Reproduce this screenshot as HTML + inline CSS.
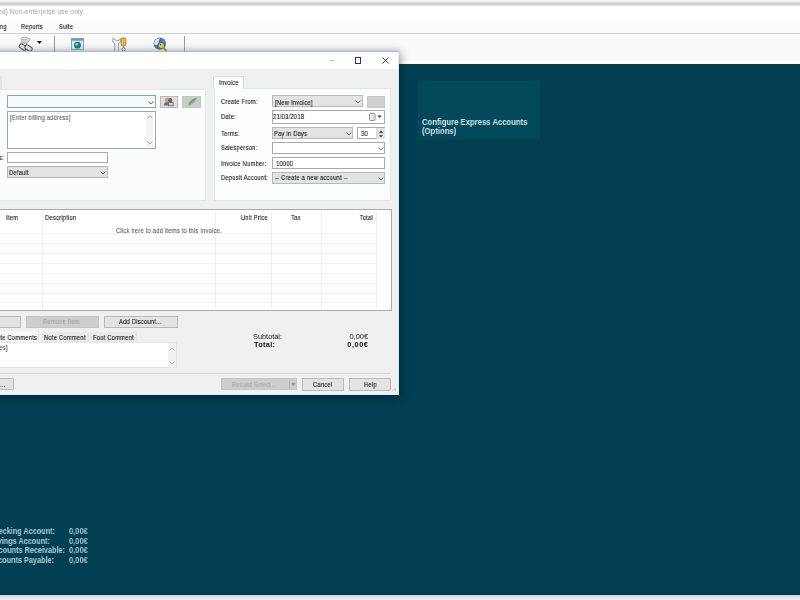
<!DOCTYPE html>
<html><head><meta charset="utf-8">
<style>
html,body{margin:0;padding:0;}
body{width:800px;height:600px;overflow:hidden;position:relative;background:#013f52;font-family:"Liberation Sans",sans-serif;}
.a{position:absolute;box-sizing:border-box;}
.t{position:absolute;white-space:nowrap;line-height:10px;height:10px;font-family:"Liberation Sans",sans-serif;font-size:7px;color:#111;letter-spacing:0.25px;will-change:transform;transform:scaleX(0.83);-webkit-text-stroke:0.1px currentColor;transform-origin:0 0;}
.r{transform-origin:100% 0;text-align:right;}
.cmb{position:absolute;box-sizing:border-box;background:#e3e3e3;border:1px solid #b8b8b8;}
.box{position:absolute;box-sizing:border-box;background:#fff;border:1px solid #a9a9a9;}
.btn{position:absolute;box-sizing:border-box;background:#e3e3e3;border:1px solid #bababa;}
.dis{position:absolute;box-sizing:border-box;background:#cdcdcd;border:1px solid #c6c6c6;}
.chev{position:absolute;width:6px;height:4px;}
.hl{position:absolute;height:1px;background:#f2f2f2;}
.vl{position:absolute;width:1px;background:#efefef;}
#root{position:absolute;left:0;top:0;width:800px;height:600px;overflow:hidden;background:#013f52;filter:blur(0.4px);}
</style></head><body><div id="root">

<!-- top chrome -->
<div class="a" style="left:0;top:0;width:800px;height:6.5px;background:linear-gradient(#fdfdfd 0px,#ebebeb 1.6px,#d6d6d6 3px,#cbcbcb 4.3px,#e2e2e2 5.3px,#fcfcfc 6.5px)"></div>
<div class="a" style="left:0;top:6.5px;width:800px;height:12.5px;background:#fff"></div>
<div class="t" style="transform:none;letter-spacing:0;-webkit-text-stroke:0;left:-21.9px;top:7.4px;font-size:6.9px;color:#a5a5a5">Licensed) Non-enterprise use only</div>
<div class="a" style="left:0;top:19px;width:800px;height:14px;background:#fbfbfb"></div>
<div class="t" style="left:-17.6px;top:22.2px;">Invoicing</div>
<div class="t" style="left:21px;top:22.2px;">Reports</div>
<div class="t" style="left:59.4px;top:22.2px;">Suite</div>
<div class="a" style="left:0;top:33px;width:800px;height:1px;background:#cfcfcf"></div>
<div class="a" style="left:0;top:34px;width:800px;height:30px;background:linear-gradient(#f9f9f9,#f9f9f9 88%,#fefefe 90%,#fdfdfd)"></div>
<div class="a" style="left:0;top:64px;width:800px;height:1px;background:#1a3844"></div>
<div class="a" style="left:0;top:34px;width:400px;height:18px;background:linear-gradient(#fafafa,#f9f9f9 60%,#f2f4f6 82%,#e3eaf0)"></div>

<!-- toolbar icons -->
<svg class="a" style="left:18px;top:36px" width="16" height="16" viewBox="0 0 16 16">
  <path d="M3 2.5C4 1 7 0.8 9 1.5l2.5 1.5-0.5 2.5-2 0.5L9 7.5 4 8z" fill="#e6e6e6" stroke="#8a8a8a" stroke-width="0.7"/>
  <path d="M4 3.5h5M4.5 5h4M4 6.5h4" stroke="#a0a0a0" stroke-width="0.6"/>
  <rect x="1.2" y="9" width="7.5" height="4.2" rx="1.6" transform="rotate(32 5 11)" fill="#e4e8ea" stroke="#484848" stroke-width="0.95"/>
  <rect x="6.8" y="10" width="7.5" height="4.2" rx="1.6" transform="rotate(32 10.5 12)" fill="#e4e8ea" stroke="#484848" stroke-width="0.95"/>
</svg>
<svg class="a" style="left:37px;top:41px" width="5" height="3" viewBox="0 0 5 3"><path d="M0 0h5L2.5 3z" fill="#111"/></svg>
<svg class="a" style="left:71px;top:38px" width="13" height="12" viewBox="0 0 13 12">
  <rect x="0.5" y="0.5" width="12" height="11" fill="#d6f0f0" stroke="#8fa4ac"/>
  <rect x="0.5" y="0.5" width="12" height="2.2" fill="#6f9cb2"/>
  <circle cx="6.5" cy="7.2" r="3.4" fill="#1f7f78"/>
  <circle cx="5.8" cy="6.4" r="1.3" fill="#86d4cc"/>
</svg>
<svg class="a" style="left:112px;top:36.5px" width="15" height="15" viewBox="0 0 15 15">
  <path d="M0.8 1.5v3.5l2 2v6.5l1.2 1h1.2l1.2-1V7l2-2V1.5L6.8 3.5h-2.4z" fill="#f4f4f4" stroke="#8a8a8a" stroke-width="0.8"/>
  <rect x="9" y="0.8" width="5" height="8" rx="1.6" fill="#d8aa30" stroke="#a88428" stroke-width="0.6"/>
  <path d="M10.5 2.5v5M12.5 2.5v5" stroke="#f0d070" stroke-width="0.6"/>
  <path d="M11.5 9v1.5" stroke="#777" stroke-width="0.9"/>
  <circle cx="11.5" cy="12.3" r="1.7" fill="#f2f2f2" stroke="#6a6a6a" stroke-width="0.8"/>
</svg>
<svg class="a" style="left:153px;top:36.5px" width="15" height="15" viewBox="0 0 15 15">
  <circle cx="6.8" cy="6.6" r="6.2" fill="#4a6cb0"/>
  <path d="M1.5 4.5C2.5 2 5 1 7 1.2 5.5 3 6 5 4.5 7.5 3 9 1.5 8 1.2 6.5z" fill="#dce8f4"/>
  <path d="M8 1.5c2 0.5 3.5 2 4 3.5-1 0.5-2.5 0-3-1z" fill="#6a8cc8"/>
  <path d="M9 9.5l4.5 4.3" stroke="#8a9a20" stroke-width="1.8"/>
  <circle cx="8.3" cy="8.6" r="2.5" fill="#e6e030"/>
  <circle cx="7.5" cy="7.8" r="0.7" fill="#404010"/>
</svg>
<div class="a" style="left:54px;top:36px;width:1px;height:16px;background:#9a9a9a"></div>
<div class="a" style="left:184px;top:36px;width:1px;height:16px;background:#9a9a9a"></div>

<!-- dialog -->
<div class="a" style="left:-10px;top:51px;width:409px;height:344px;background:#f0f0f0;border:1px solid #a9bccb;border-left:none;border-bottom-color:#dbecf4;border-right-color:#d8eaf4;box-shadow:1px 2px 9px rgba(0,15,25,0.45)"></div>
<div class="a" style="left:0;top:52px;width:398px;height:17px;background:#fff"></div>
<!-- caption buttons -->
<div class="a" style="left:329px;top:60px;width:6px;height:1px;background:#c8c8c8"></div>
<div class="a" style="left:355px;top:57px;width:6px;height:6.5px;border:1px solid #333"></div>
<svg class="a" style="left:382px;top:57px" width="7" height="7" viewBox="0 0 7 7"><path d="M0.5 0.5l6 6M6.5 0.5l-6 6" stroke="#333" stroke-width="0.9"/></svg>

<!-- left panel (customer) -->
<div class="a" style="left:0;top:76px;width:2px;height:13px;background:#e4e4e4"></div>
<div class="a" style="left:-5px;top:88.5px;width:211px;height:112px;background:#fbfdfd;border:1px solid #e6e6e6"></div>
<div class="a" style="left:7px;top:95px;width:148.5px;height:12.5px;background:#f6fbfb;border:1px solid #86a9ab"></div>
<svg class="chev" style="left:148px;top:100.5px" viewBox="0 0 6 4"><path d="M0.5 0.5L3 3l2.5-2.5" fill="none" stroke="#555" stroke-width="0.8"/></svg>
<div class="btn" style="left:159.5px;top:96px;width:18.5px;height:11.5px;background:#dedede"></div>
<svg class="a" style="left:163px;top:97px" width="11" height="10" viewBox="0 0 11 10">
  <ellipse cx="4" cy="3" rx="2.4" ry="2.4" fill="#c4a888"/>
  <ellipse cx="7.2" cy="3.2" rx="2" ry="2.2" fill="#7a5a40"/>
  <path d="M0.8 8.5c0-2.5 1.5-3.5 3.2-3.5s3.2 1 3.2 3.5z" fill="#6a7858"/>
  <rect x="5.5" y="5.6" width="4.6" height="3.2" fill="#c8d0dc" stroke="#4a5a78" stroke-width="0.7"/>
</svg>
<div class="dis" style="left:182px;top:96px;width:18.5px;height:11.5px;background:#cbcbcb"></div>
<svg class="a" style="left:186px;top:96.5px" width="12" height="10" viewBox="0 0 12 10">
  <path d="M2 7.5C3 5 6 2 9 1l1.2 1.3C9 5 6 7.5 3.2 8.6z" fill="#72b868" opacity="0.9"/>
  <path d="M3.5 6.5C5 4.5 7 3 9 2" stroke="#4a9a48" stroke-width="0.9" fill="none"/>
  <path d="M9 1l1.5-0.5 0.5 1.5-0.8 0.3z" fill="#909890"/>
</svg>
<div class="box" style="left:7px;top:111px;width:148.5px;height:37.5px;border-color:#a4a4a4"></div>
<div class="a" style="left:145.5px;top:112px;width:7px;height:35px;background:#f4f4f4"></div>
<div class="t" style="left:10px;top:113.2px;color:#5a5a5a">[Enter billing address]</div>
<svg class="chev" style="left:147px;top:114.8px" viewBox="0 0 6 4"><path d="M0.5 3.5L3 1l2.5 2.5" fill="none" stroke="#999" stroke-width="0.8"/></svg>
<svg class="chev" style="left:147px;top:140.5px" viewBox="0 0 6 4"><path d="M0.5 0.5L3 3l2.5-2.5" fill="none" stroke="#999" stroke-width="0.8"/></svg>
<div class="t" style="left:-46px;top:153px;width:50px;text-align:right;transform-origin:100% 0">Address:</div>
<div class="box" style="left:7px;top:151.5px;width:100.5px;height:11px;"></div>
<div class="cmb" style="left:7px;top:166.2px;width:100.5px;height:11.8px;"></div>
<div class="t" style="left:9px;top:167.5px;">Default</div>
<svg class="chev" style="left:99.5px;top:170.5px" viewBox="0 0 6 4"><path d="M0.5 0.5L3 3l2.5-2.5" fill="none" stroke="#555" stroke-width="0.8"/></svg>

<!-- invoice tab + panel -->
<div class="a" style="left:214px;top:88px;width:176.5px;height:113.3px;background:#fdfefe;border:1px solid #e4e4e4"></div>
<div class="a" style="left:213px;top:76px;width:30.5px;height:13px;background:#fdfefe;border:1px solid #dedede;border-bottom:none"></div>
<div class="t" style="left:218.5px;top:77.8px;">Invoice</div>

<div class="t" style="left:220.8px;top:97.2px;">Create From:</div>
<div class="t" style="left:220.8px;top:111.7px;">Date:</div>
<div class="t" style="left:220.8px;top:128.8px;">Terms:</div>
<div class="t" style="left:220.8px;top:143.3px;">Salesperson:</div>
<div class="t" style="left:220.8px;top:158.8px;">Invoice Number:</div>
<div class="t" style="left:220.8px;top:173px;">Deposit Account:</div>

<div class="cmb" style="left:272.2px;top:95.3px;width:90.7px;height:12.2px;"></div>
<div class="t" style="left:274.7px;top:97.5px;">[New Invoice]</div>
<svg class="chev" style="left:355px;top:100px" viewBox="0 0 6 4"><path d="M0.5 0.5L3 3l2.5-2.5" fill="none" stroke="#555" stroke-width="0.8"/></svg>
<div class="dis" style="left:367px;top:96px;width:18px;height:11.5px;background:#cfcfcf"></div>

<div class="box" style="left:272.2px;top:110px;width:113.3px;height:13.5px;"></div>
<div class="t" style="left:273.4px;top:112.1px;">21/03/2018</div>
<svg class="a" style="left:369px;top:113px" width="13" height="8" viewBox="0 0 13 8">
  <rect x="0.5" y="0.5" width="5.5" height="7" rx="1" fill="#e8e8e8" stroke="#777" stroke-width="0.8"/>
  <path d="M8.5 2.5h4L10.5 5z" fill="#333"/>
</svg>

<div class="cmb" style="left:272.2px;top:127.2px;width:80.5px;height:12.3px;"></div>
<div class="t" style="left:274px;top:128.8px;">Pay in Days</div>
<svg class="chev" style="left:345.5px;top:132px" viewBox="0 0 6 4"><path d="M0.5 0.5L3 3l2.5-2.5" fill="none" stroke="#555" stroke-width="0.8"/></svg>
<div class="box" style="left:357px;top:127.2px;width:28px;height:12.3px;"></div>
<div class="t" style="left:360.8px;top:128.8px;">30</div>
<div class="a" style="left:375.5px;top:128px;width:9px;height:10.8px;background:#e4e4e4;border-left:1px solid #d4d4d4"></div>
<div class="a" style="left:376px;top:133px;width:8px;height:1px;background:#d0d0d0"></div>
<svg class="a" style="left:377.5px;top:129.5px" width="6" height="8" viewBox="0 0 6 8"><path d="M1 2.8h4L3 0.8z" fill="#222"/><path d="M1 5.2h4L3 7.2z" fill="#222"/></svg>

<div class="box" style="left:272.2px;top:142px;width:113.3px;height:12.4px;"></div>
<svg class="chev" style="left:378px;top:147px" viewBox="0 0 6 4"><path d="M0.5 0.5L3 3l2.5-2.5" fill="none" stroke="#555" stroke-width="0.8"/></svg>

<div class="box" style="left:272.2px;top:157.4px;width:113.3px;height:11.4px;"></div>
<div class="t" style="left:276px;top:158.8px;">10000</div>

<div class="cmb" style="left:272.2px;top:172.2px;width:113.3px;height:11.4px;"></div>
<div class="t" style="left:274.5px;top:173px;">-- Create a new account --</div>
<svg class="chev" style="left:378px;top:176.5px" viewBox="0 0 6 4"><path d="M0.5 0.5L3 3l2.5-2.5" fill="none" stroke="#555" stroke-width="0.8"/></svg>

<!-- grid -->
<div class="a" style="left:-5px;top:209px;width:397px;height:101.5px;background:#fff;border:1px solid #aaaaaa"></div>
<div class="hl" style="left:0;top:233px;width:376px"></div>
<div class="hl" style="left:0;top:243px;width:376px"></div>
<div class="hl" style="left:0;top:253px;width:376px"></div>
<div class="hl" style="left:0;top:263px;width:376px"></div>
<div class="hl" style="left:0;top:273px;width:376px"></div>
<div class="hl" style="left:0;top:283px;width:376px"></div>
<div class="hl" style="left:0;top:292.5px;width:376px"></div>
<div class="hl" style="left:0;top:302px;width:376px"></div>
<div class="vl" style="left:41.5px;top:210px;height:100px"></div>
<div class="vl" style="left:215px;top:210px;height:100px"></div>
<div class="vl" style="left:271px;top:210px;height:100px"></div>
<div class="vl" style="left:320.5px;top:210px;height:100px"></div>
<div class="vl" style="left:376px;top:210px;height:100px"></div>
<div class="t" style="left:5.6px;top:212.5px;">Item</div>
<div class="t" style="left:45px;top:212.5px;">Description</div>
<div class="t" style="left:207.7px;top:212.5px;width:60px;text-align:right;transform-origin:100% 0">Unit Price</div>
<div class="t" style="left:290.5px;top:212.5px;">Tax</div>
<div class="t" style="left:312.7px;top:212.5px;width:60px;text-align:right;transform-origin:100% 0">Total</div>
<div class="t" style="left:116.1px;top:226px;color:#575757">Click here to add items to this invoice.</div>

<!-- buttons row -->
<div class="btn" style="left:-10px;top:315.6px;width:30.6px;height:12px;"></div>
<div class="dis" style="left:25.6px;top:315.6px;width:73.2px;height:12px;"></div>
<div class="t" style="left:43px;top:317px;color:#a3a3a3">Remove Item</div>
<div class="btn" style="left:104px;top:315.6px;width:73.5px;height:12.2px;"></div>
<div class="t" style="left:119px;top:316.8px;">Add Discount...</div>

<!-- comments tabs -->
<div class="a" style="left:-5px;top:330.5px;width:44px;height:12px;background:#f6f6f6;border-right:1px solid #e6e6e6"></div>
<div class="t" style="left:-14.3px;top:333px;">Private Comments</div>
<div class="a" style="left:41.5px;top:332px;width:47px;height:10px;background:#e9e9e9;border-right:1px solid #e4e4e4"></div>
<div class="t" style="left:44.4px;top:333px;">Note Comment</div>
<div class="a" style="left:89.5px;top:332px;width:47px;height:10px;background:#e9e9e9;border-right:1px solid #e4e4e4"></div>
<div class="t" style="left:92.5px;top:333px;">Foot Comment</div>
<div class="a" style="left:-5px;top:342px;width:182px;height:26px;background:#fff;border:1px solid #e2e2e2;border-top-color:#e6e6e6"></div>
<div class="a" style="left:167.5px;top:343px;width:8.5px;height:24px;background:#f1f1f1"></div>
<div class="t" style="left:-28.5px;top:343.2px;color:#555">[Enter notes]</div>
<svg class="chev" style="left:169px;top:346.5px" viewBox="0 0 6 4"><path d="M0.5 3.5L3 1l2.5 2.5" fill="none" stroke="#aaa" stroke-width="0.8"/></svg>
<svg class="chev" style="left:169px;top:361px" viewBox="0 0 6 4"><path d="M0.5 0.5L3 3l2.5-2.5" fill="none" stroke="#aaa" stroke-width="0.8"/></svg>

<!-- totals -->
<div class="t" style="transform:none;letter-spacing:0;-webkit-text-stroke:0;left:253.1px;top:332px;font-size:7.37px;color:#222">Subtotal:</div>
<div class="t" style="transform:none;left:253.5px;top:339.8px;font-size:7.4px;letter-spacing:0.3px;-webkit-text-stroke:0;font-weight:bold;color:#111">Total:</div>
<div class="t" style="transform:none;letter-spacing:0;-webkit-text-stroke:0;left:340px;top:332px;width:28px;text-align:right;font-size:7.4px;color:#222">0,00€</div>
<div class="t" style="transform:none;left:330px;top:339.8px;width:38.5px;text-align:right;font-size:7.4px;letter-spacing:0.55px;-webkit-text-stroke:0;font-weight:bold;color:#111">0,00€</div>

<!-- bottom -->
<div class="a" style="left:0;top:373px;width:391px;height:1px;background:#d6d6d6"></div>
<div class="btn" style="left:-10px;top:378px;width:23.8px;height:12.3px;"></div>
<div class="t" style="left:0.3px;top:380px;">...</div>
<div class="dis" style="left:221.2px;top:378px;width:75.7px;height:12px;"></div>
<div class="t" style="left:231.9px;top:379.9px;color:#a3a3a3">Record Select...</div>
<div class="a" style="left:289px;top:379.5px;width:1px;height:9px;background:#b8b8b8"></div>
<svg class="a" style="left:291px;top:382.5px" width="5" height="3" viewBox="0 0 5 3"><path d="M0 0h5L2.5 3z" fill="#999"/></svg>
<div class="btn" style="left:301.9px;top:378.2px;width:42.2px;height:12.4px;"></div>
<div class="t" style="left:312.9px;top:379.5px;">Cancel</div>
<div class="btn" style="left:348.6px;top:378.2px;width:42.3px;height:12.4px;"></div>
<div class="t" style="left:363.8px;top:379.5px;">Help</div>

<svg class="a" style="left:391px;top:387px" width="6" height="6" viewBox="0 0 6 6"><g fill="#c4c4c4"><rect x="4" y="0.5" width="1" height="1"/><rect x="2.5" y="2" width="1" height="1"/><rect x="4" y="2" width="1" height="1"/><rect x="1" y="3.5" width="1" height="1"/><rect x="2.5" y="3.5" width="1" height="1"/><rect x="4" y="3.5" width="1" height="1"/></g></svg>
<!-- teal area content -->
<div class="a" style="left:0;top:594px;width:800px;height:1px;background:#083744"></div>
<div class="a" style="left:0;top:595px;width:800px;height:5px;background:linear-gradient(#b8cbd0,#dde3e6 30%,#e4e6e8 60%,#f1efef)"></div>
<div class="a" style="left:418px;top:81px;width:122px;height:58px;background:#03495c"></div>
<div class="t" style="transform:scaleX(0.92);letter-spacing:0;-webkit-text-stroke:0;left:422px;top:117px;font-size:8.4px;font-weight:bold;color:#d6e6ee">Configure Express Accounts</div>
<div class="t" style="transform:scaleX(0.92);letter-spacing:0;-webkit-text-stroke:0;left:422px;top:125.5px;font-size:8.4px;font-weight:bold;color:#d6e6ee">(Options)</div>

<div class="t" style="left:-44.8px;top:526.5px;font-size:8.2px;font-weight:bold;color:#a9c3d2;width:100px;text-align:right;transform:scaleX(0.89);transform-origin:100% 0;letter-spacing:0;-webkit-text-stroke:0.1px #a9c3d2">Checking Account:</div>
<div class="t" style="left:-49.9px;top:536.5px;font-size:8.2px;font-weight:bold;color:#a9c3d2;width:100px;text-align:right;transform:scaleX(0.89);transform-origin:100% 0;letter-spacing:0;-webkit-text-stroke:0.1px #a9c3d2">Savings Account:</div>
<div class="t" style="left:-34.9px;top:546.1px;font-size:8.2px;font-weight:bold;color:#a9c3d2;width:100px;text-align:right;transform:scaleX(0.89);transform-origin:100% 0;letter-spacing:0;-webkit-text-stroke:0.1px #a9c3d2">Accounts Receivable:</div>
<div class="t" style="left:-46.3px;top:555.9px;font-size:8.2px;font-weight:bold;color:#a9c3d2;width:100px;text-align:right;transform:scaleX(0.89);transform-origin:100% 0;letter-spacing:0;-webkit-text-stroke:0.1px #a9c3d2">Accounts Payable:</div>
<div class="t" style="transform:scaleX(0.915);transform-origin:0 0;letter-spacing:0;-webkit-text-stroke:0;left:68.75px;top:526.5px;font-size:8.2px;font-weight:bold;color:#a9c3d2">0,00€</div>
<div class="t" style="transform:scaleX(0.915);transform-origin:0 0;letter-spacing:0;-webkit-text-stroke:0;left:68.75px;top:536.5px;font-size:8.2px;font-weight:bold;color:#a9c3d2">0,00€</div>
<div class="t" style="transform:scaleX(0.915);transform-origin:0 0;letter-spacing:0;-webkit-text-stroke:0;left:68.75px;top:546.1px;font-size:8.2px;font-weight:bold;color:#a9c3d2">0,00€</div>
<div class="t" style="transform:scaleX(0.915);transform-origin:0 0;letter-spacing:0;-webkit-text-stroke:0;left:68.75px;top:555.9px;font-size:8.2px;font-weight:bold;color:#a9c3d2">0,00€</div>

</div></body></html>
